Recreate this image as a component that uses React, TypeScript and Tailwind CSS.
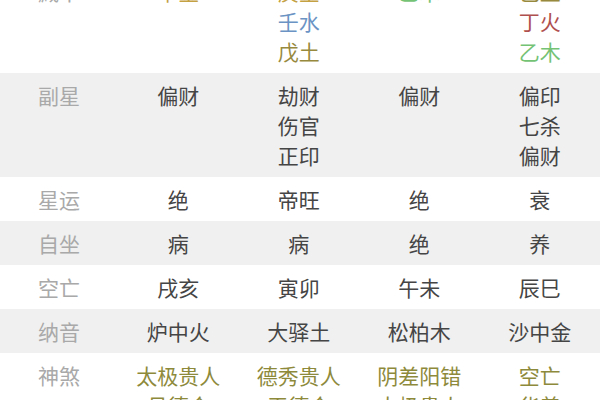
type Cell = { text: string; color?: string };

type Row = {
    label: string;
    cells: Cell[][];
};

const dark = "text-[#454545]";
const gold = "text-[#8e8a3c]";

const rows: Row[] = [
    {
        label: "藏干",
        cells: [
            [{ text: "辛金", color: "text-[#c4a244]" }],
            [
                { text: "庚金", color: "text-[#c4a244]" },
                { text: "壬水", color: "text-[#6b93c4]" },
                { text: "戊土", color: "text-[#978a3e]" },
            ],
            [{ text: "乙木", color: "text-[#74c274]" }],
            [
                { text: "己土", color: "text-[#978a3e]" },
                { text: "丁火", color: "text-[#b0504e]" },
                { text: "乙木", color: "text-[#74c274]" },
            ],
        ],
    },
    {
        label: "副星",
        cells: [
            [{ text: "偏财" }],
            [{ text: "劫财" }, { text: "伤官" }, { text: "正印" }],
            [{ text: "偏财" }],
            [{ text: "偏印" }, { text: "七杀" }, { text: "偏财" }],
        ],
    },
    { label: "星运", cells: [[{ text: "绝" }], [{ text: "帝旺" }], [{ text: "绝" }], [{ text: "衰" }]] },
    { label: "自坐", cells: [[{ text: "病" }], [{ text: "病" }], [{ text: "绝" }], [{ text: "养" }]] },
    { label: "空亡", cells: [[{ text: "戌亥" }], [{ text: "寅卯" }], [{ text: "午未" }], [{ text: "辰巳" }]] },
    { label: "纳音", cells: [[{ text: "炉中火" }], [{ text: "大驿土" }], [{ text: "松柏木" }], [{ text: "沙中金" }]] },
    {
        label: "神煞",
        cells: [
            [{ text: "太极贵人", color: gold }, { text: "月德合", color: gold }],
            [{ text: "德秀贵人", color: gold }, { text: "天德合", color: gold }],
            [{ text: "阴差阳错", color: gold }, { text: "太极贵人", color: gold }],
            [{ text: "空亡", color: gold }, { text: "华盖", color: gold }],
        ],
    },
];

export default function App() {
    return (
        <div
            className="h-[400px] w-[600px] overflow-hidden bg-white"
            style={{ fontFamily: '"Noto Sans CJK SC", "Noto Sans", sans-serif' }}
        >
            {/* the screenshot starts part way through the 藏干 row */}
            <div className="-mt-[31px]">
                {rows.map((row, i) => (
                    <div
                        key={row.label}
                        className={`grid grid-cols-[118px_1fr_1fr_1fr_1fr] py-[7px] text-[21px] leading-[30px] ${
                            i % 2 === 1 ? "bg-[#f0f0f0]" : "bg-white"
                        }`}
                    >
                        <div className="text-center text-[#a9a9a9]">{row.label}</div>
                        {row.cells.map((lines, j) => (
                            <div key={j} className="flex flex-col items-center">
                                {lines.map((line, k) => (
                                    <span key={k} className={line.color ?? dark}>
                                        {line.text}
                                    </span>
                                ))}
                            </div>
                        ))}
                    </div>
                ))}
            </div>
        </div>
    );
}
